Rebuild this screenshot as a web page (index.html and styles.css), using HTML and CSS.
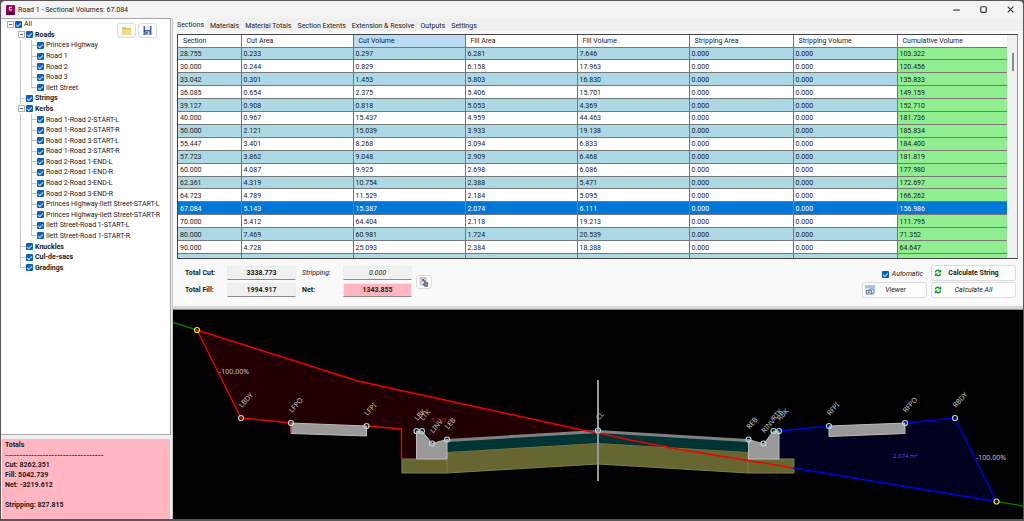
FILE: index.html
```html
<!DOCTYPE html>
<html lang="en">
<head>
    <meta charset="UTF-8">
    <meta name="viewport" content="width=device-width, initial-scale=1.0">
    <title>Road 1 - Sectional Volumes: 67.084</title>
    <link rel="stylesheet" href="styles.css">
</head>
<body>
    <div id="app">
        <header class="titlebar">
            <svg class="app-icon" viewBox="0 0 9 10">
                <rect width="9" height="10" rx="1" fill="#a3005c"/>
                <rect y="7" width="9" height="3" rx="1" fill="#5c0034"/>
                <path d="M6 2.2H3.4V5H6" fill="none" stroke="#fff" stroke-width="1"/>
            </svg>
            <h1>Road 1 - Sectional Volumes: 67.084</h1>
            <div class="window-buttons">
                <button type="button" aria-label="Minimize"><svg viewBox="0 0 8 8"><path d="M1 4.5h6"/></svg></button>
                <button type="button" aria-label="Maximize"><svg viewBox="0 0 8 8"><rect x="1.5" y="1.5" width="5" height="5" rx="1"/></svg></button>
                <button type="button" aria-label="Close"><svg viewBox="0 0 8 8"><path d="M1.5 1.5l5 5M6.5 1.5l-5 5"/></svg></button>
            </div>
        </header>

        <div class="content">
            <!-- String tree and overall totals -->
            <aside class="sidebar">
                <div class="tree-panel">
                    <ul id="tree" class="tree"></ul>
                    <div class="tree-tools">
                        <button type="button" class="tool-btn" aria-label="Open">
                            <svg viewBox="0 0 11 9"><path d="M1 1h3.500l1 1H10v6.500H1z" fill="#e3c75c"/><path d="M1 3.500h9v5H1z" fill="#f0dc86"/></svg>
                        </button>
                        <button type="button" class="tool-btn" aria-label="Save">
                            <svg viewBox="0 0 11 9"><path d="M1.500 0h8v9h-8z" fill="#4865a8"/><path d="M3 0h5v4H3z" fill="#e8eef8"/><path d="M3.500 5.500h4V9h-4z" fill="#c5cede"/><path d="M4.200 6h1.200v2.500H4.200z" fill="#27407c"/></svg>
                        </button>
                    </div>
                </div>
                <div class="totals">
                    <p>Totals</p>
                    <p class="rule">----------------------------------</p>
                    <p>Cut: 8262.351</p>
                    <p>Fill: 5042.739</p>
                    <p>Net: -3219.612</p>
                    <p>&nbsp;</p>
                    <p>Stripping: 827.815</p>
                </div>
            </aside>

            <main class="main">
                <nav class="tabs">
                    <a href="#" class="active">Sections</a>
                    <a href="#">Materials</a>
                    <a href="#">Material Totals</a>
                    <a href="#">Section Extents</a>
                    <a href="#">Extension &amp; Resolve</a>
                    <a href="#">Outputs</a>
                    <a href="#">Settings</a>
                </nav>

                <section class="panel">
                    <div class="grid-box">
                        <div class="grid-view">
                            <table>
                                <colgroup>
                                    <col class="c-section"><col class="c-area"><col class="c-area"><col class="c-area">
                                    <col class="c-area"><col class="c-strip"><col class="c-strip"><col class="c-area">
                                </colgroup>
                                <thead>
                                    <tr>
                                        <th>Section</th>
                                        <th>Cut Area</th>
                                        <th class="sorted">Cut Volume</th>
                                        <th>Fill Area</th>
                                        <th>Fill Volume</th>
                                        <th>Stripping Area</th>
                                        <th>Stripping Volume</th>
                                        <th>Cumulative Volume</th>
                                    </tr>
                                </thead>
                                <tbody id="rows"></tbody>
                            </table>
                        </div>
                        <div class="scrollbar"><div class="thumb"></div></div>
                    </div>

                    <div class="controls">
                        <div class="fields">
                            <label for="cut">Total Cut:</label>
                            <input type="text" id="cut" value="3338.773" readonly>
                            <label for="stripping" class="italic">Stripping:</label>
                            <input type="text" id="stripping" class="italic" value="0.000" readonly>
                            <label for="fill">Total Fill:</label>
                            <input type="text" id="fill" value="1994.917" readonly>
                            <label for="net">Net:</label>
                            <input type="text" id="net" class="negative" value="1343.855" readonly>
                        </div>
                        <button type="button" class="copy-btn" aria-label="Copy">
                            <svg viewBox="0 0 10 10"><path d="M1 .5h6v7.500H1z" fill="#cfe0f5" stroke="#9ab0d0" stroke-width=".6"/><path d="M2.500 1.500l3 3M5.500 1.500l-3 3" stroke="#d03040" stroke-width=".9"/><path d="M5 3.500v4l-1-.5.2 1.200 1.800 1.500h2.800V5.500L6.200 5V3.500z" fill="#7a828c" stroke="#4c545e" stroke-width=".5"/></svg>
                        </button>
                        <div class="actions">
                            <label class="auto"><input type="checkbox" checked><span>Automatic</span></label>
                            <button type="button" class="strong">
                                <svg viewBox="0 0 8 8"><use href="#refresh"/></svg>
                                <span>Calculate String</span>
                            </button>
                            <button type="button" class="italic">
                                <svg class="viewer-icon" viewBox="0 0 10 10"><rect width="10" height="10" fill="#d5e2f4"/><rect width="10" height="3" fill="#a9c3e8"/><path d="M1.500 5.500h5v3.500h-5zM3.500 5.500L5 4h4v3.500L6.500 9" fill="#e4ebf5" stroke="#50688c" stroke-width=".8"/><path d="M3 6.500h2v1.500H3z" fill="#6d86aa"/></svg>
                                <span>Viewer</span>
                            </button>
                            <button type="button" class="italic">
                                <svg viewBox="0 0 8 8"><use href="#refresh"/></svg>
                                <span>Calculate All</span>
                            </button>
                        </div>
                    </div>
                </section>

                <!-- Cross section drawing -->
                <svg class="section-view" viewBox="173 310 850 209">
                    <defs>
                        <g id="refresh" fill="none" stroke="#0f9d1f" stroke-width="1.5">
                            <path d="M1.500 3.400C1.500 1.300 4 .6 5.400 2"/>
                            <path d="M6.500 4.600C6.500 6.700 4 7.400 2.600 6"/>
                            <path d="M7.200.2v3.400H3.800zM.8 7.800V4.400h3.400z" fill="#0f9d1f" stroke="none"/>
                        </g>
                    </defs>
                    <polygon class="cut-area" points="197,330 358,381 587,431 598,433 447,442 432,443 422,431 416,431 416,459 401,459 401,429 366,426 291,423 241,418"/>
                    <polygon class="fill-area" points="779,431 829,426 905,423 955,418 996,501 794,468 794,459 779,459"/>

                    <polygon class="subbase" points="402,459 447,459 447,452 598,443 748,452 748,459 794,459 794,473 748,473 598,464 447,473 402,473"/>
                    <path class="subbase-line" d="M447 459v14M748 459v14M417 459h30M748 459h31"/>
                    <polygon class="base" points="447,441 598,432 748,441 748,452 598,443 447,452"/>
                    <polyline class="surface" points="447,440.500 598,431.500 748,440.500"/>
                    <polygon class="concrete" points="416.500,431 422,431 432,443.500 447,439.500 447,459 416.500,459"/>
                    <polygon class="concrete" points="748.500,439.500 763.500,444 773.500,431 779,431 779,459 748.500,459"/>
                    <polygon class="concrete" points="291,423 366.500,426 366.500,436 291,433.500"/>
                    <polygon class="concrete" points="829,426 905,423 905,433.500 829,436.500"/>
                    <path class="centre" d="M598 380v101"/>

                    <polyline class="natural" points="173,322.500 197,330"/>
                    <polyline class="natural" points="996.500,501.500 1023,506"/>
                    <polyline class="cut-line" points="291,423 241,418 197,330 358,381 587,431 598,433 630,440 680,449.500 748,460.500 793,468"/>
                    <polyline class="cut-line" points="366.500,426 401.500,429 401.500,459"/>
                    <path class="cut-line thin" d="M401.500 459v14M291 423v10"/>
                    <polyline class="fill-line" points="779,431 829,426"/>
                    <polyline class="fill-line" points="905,423 955,418 996.500,501.500 793,468"/>

                    <g id="points"></g>
                    <text class="slope" x="219" y="374">-100.00%</text>
                    <text class="slope" x="976" y="460">-100.00%</text>
                    <text class="area cut-text" x="431" y="422">5.143 m²</text>
                    <text class="area fill-text" x="893" y="458">2.074 m²</text>
                </svg>
            </main>
        </div>
    </div>

    <script>
        // name, level, last child of its parent
        const nodes = [
            ['All', 0], ['Roads', 1], ['Princes Highway', 2], ['Road 1', 2], ['Road 2', 2], ['Road 3', 2],
            ['Ilett Street', 2, true], ['Strings', 1], ['Kerbs', 1],
            ['Road 1-Road 2-START-L', 2], ['Road 1-Road 2-START-R', 2],
            ['Road 1-Road 3-START-L', 2], ['Road 1-Road 3-START-R', 2],
            ['Road 2-Road 1-END-L', 2], ['Road 2-Road 1-END-R', 2],
            ['Road 2-Road 3-END-L', 2], ['Road 2-Road 3-END-R', 2],
            ['Princes Highway-Ilett Street-START-L', 2], ['Princes Highway-Ilett Street-START-R', 2],
            ['Ilett Street-Road 1-START-L', 2], ['Ilett Street-Road 1-START-R', 2, true],
            ['Knuckles', 1], ['Cul-de-sacs', 1], ['Gradings', 1, true],
        ];

        const expandable = ['All', 'Roads', 'Kerbs'];

        document.getElementById('tree').innerHTML = nodes.map(([name, level, last]) => {
            let guides = '';
            if (level > 0) guides += '<i class="guide"></i>';
            if (level > 1) guides += '<i class="guide line"></i>';
            const kind = expandable.includes(name) ? 'expander' : last ? 'elbow' : 'tee';
            guides += `<i class="guide ${kind}${level === 0 ? ' root' : ''}"></i>`;
            return `<li class="level-${level}">${guides}<label><input type="checkbox" checked><span>${name}</span></label></li>`;
        }).join('');

        // section, cut area, cut volume, fill area, fill volume, cumulative volume
        const sections = [
            ['28.755', '0.233', '0.297', '6.281', '7.646', '103.322'],
            ['30.000', '0.244', '0.829', '6.158', '17.963', '120.456'],
            ['33.042', '0.301', '1.453', '5.803', '16.830', '135.833'],
            ['36.085', '0.654', '2.375', '5.406', '15.701', '149.159'],
            ['39.127', '0.908', '0.818', '5.053', '4.369', '152.710'],
            ['40.000', '0.967', '15.437', '4.959', '44.463', '181.736'],
            ['50.000', '2.121', '15.039', '3.933', '19.138', '185.834'],
            ['55.447', '3.401', '8.268', '3.094', '6.833', '184.400'],
            ['57.723', '3.862', '9.048', '2.909', '6.468', '181.819'],
            ['60.000', '4.087', '9.925', '2.698', '6.086', '177.980'],
            ['62.361', '4.319', '10.754', '2.388', '5.471', '172.697'],
            ['64.723', '4.789', '11.529', '2.184', '5.095', '166.262'],
            ['67.084', '5.143', '15.387', '2.074', '6.111', '156.986'],
            ['70.000', '5.412', '64.404', '2.118', '19.213', '111.795'],
            ['80.000', '7.469', '60.981', '1.724', '20.539', '71.352'],
            ['90.000', '4.728', '25.093', '2.384', '18.388', '64.647'],
            ['', '', '', '', '', ''],
        ];

        document.getElementById('rows').innerHTML = sections.map((row) => {
            const strip = row[0] ? '0.000' : '';
            const cells = [...row.slice(0, 5), strip, strip, row[5]];
            const selected = row[0] === '67.084' ? ' class="selected"' : '';
            return `<tr${selected}>${cells.map(c => `<td>${c}</td>`).join('')}</tr>`;
        }).join('');

        // string name, point x/y
        const points = [
            ['LBDY', 241, 418], ['LFPO', 291, 423], ['LFPI', 366.5, 426],
            ['LBK', 416.5, 431], ['LTK', 422, 431], ['LINV', 432, 443.5], ['LEB', 447, 439.5],
            ['CL', 598, 430.5], ['REB', 748.5, 439.5], ['RINV', 763.5, 443.5],
            ['RTK', 773.5, 431], ['RBK', 779, 431],
            ['RFPI', 829, 426], ['RFPO', 905, 423], ['RBDY', 955, 418],
        ];

        document.getElementById('points').innerHTML = points.map(([name, x, y]) => `
            <circle class="point" cx="${x}" cy="${y}" r="2.5"/>
            <text class="point-name" transform="translate(${x + 1} ${y - 10}) rotate(-48)">${name}</text>
        `).join('') + `
            <circle class="point end" cx="197" cy="330" r="2.5"/>
            <circle class="point end" cx="996.5" cy="501.5" r="2.5"/>
        `;
    </script>
</body>
</html>
```
FILE: styles.css
```css
/* Global Styles */
* {
    box-sizing: border-box;
}

body {
    margin: 0;
    background: #5a5558;
    color: #1a1a1a;
    font-family: Roboto, 'Open Sans', sans-serif;
    font-size: 7px;
    line-height: 10px;
}

h1, p, ul {
    margin: 0;
    padding: 0;
}

button, input {
    font: inherit;
    color: inherit;
}

button {
    display: flex;
    align-items: center;
    justify-content: center;
    padding: 0;
    background: #fdfdfd;
    border: 1px solid #dcdcdc;
    border-radius: 3px;
    cursor: pointer;
}

input[type="checkbox"] {
    appearance: none;
    flex: none;
    width: 7px;
    height: 7px;
    margin: 0;
    border-radius: 1px;
    background: #0a63b8;
    display: grid;
    place-items: center;
}

input[type="checkbox"]:checked::after {
    content: '';
    width: 4px;
    height: 2px;
    border-left: 1px solid #b9d8f2;
    border-bottom: 1px solid #b9d8f2;
    transform: rotate(-45deg);
}

.italic {
    font-style: italic;
}

#app {
    display: flex;
    flex-direction: column;
    height: 100vh;
    padding: 1px 1px 2px;
}

/* Title bar */
.titlebar {
    display: flex;
    align-items: center;
    height: 17px;
    padding: 0 8px 0 5px;
    background: #f3f3f3;
    border-radius: 4px 4px 0 0;
}

.app-icon {
    width: 9px;
    height: 10px;
}

.titlebar h1 {
    margin-left: 3px;
    font-size: 7px;
    font-weight: normal;
}

.window-buttons {
    display: flex;
    gap: 18px;
    margin-left: auto;
}

.window-buttons button {
    border: none;
    background: none;
}

.window-buttons svg {
    width: 9px;
    height: 9px;
    fill: none;
    stroke: #333;
    stroke-width: 1;
}

.content {
    display: flex;
    flex: 1;
    min-height: 0;
    background: #f0f0f0;
}

/* Sidebar */
.sidebar {
    display: flex;
    flex-direction: column;
    width: 172px;
    flex: none;
    border-right: 1px solid #c8c8c8;
}

.tree-panel {
    position: relative;
    flex: 1;
    margin-right: 1px;
    padding-left: 3px;
    background: #fff;
    border: 1px solid #a8a8a8;
    border-left: none;
}

.tree {
    display: grid;
    grid-auto-rows: 1fr;
    height: 254px;
    list-style: none;
}

.tree li {
    display: flex;
    align-items: stretch;
}

.tree label {
    display: flex;
    align-items: center;
    gap: 2px;
    white-space: nowrap;
}

.level-1 {
    font-weight: bold;
}

.guide {
    width: 11px;
    background: no-repeat 5px 0;
}

.line,
.tee,
.elbow {
    background-image: linear-gradient(#c4c4c4, #c4c4c4);
    background-size: 1px 100%;
}

.tee,
.elbow {
    background-image: linear-gradient(#c4c4c4, #c4c4c4), linear-gradient(#c4c4c4, #c4c4c4);
    background-position: 5px 0, 5px 50%;
    background-size: 1px 100%, 6px 1px;
}

.elbow {
    background-size: 1px 50%, 6px 1px;
}

.guide:first-child:not(.root) {
    background-image: none;
}

.guide.expander {
    display: flex;
    align-items: center;
    padding-left: 3px;
}

.expander::before {
    content: '';
    width: 5px;
    height: 5px;
    border: 1px solid #b0b0b0;
    background: linear-gradient(#556, #556) no-repeat center / 3px 1px #fff;
}

.tree-tools {
    position: absolute;
    top: 4px;
    right: 13px;
    display: flex;
    gap: 2px;
}

.tool-btn {
    width: 19px;
    height: 15px;
}

.tool-btn svg {
    width: 11px;
    height: 9px;
}

.totals {
    margin: 4px 2px 0 1px;
    padding: 1px 3px 9px;
    background: #ffb6c1;
    font-weight: bold;
}

.totals .rule {
    font-family: 'Noto Sans', sans-serif;
    font-size: 9px;
    font-weight: normal;
}

/* Tabs */
.main {
    display: flex;
    flex-direction: column;
    flex: 1;
    min-width: 0;
}

.tabs {
    display: flex;
    height: 13px;
    padding-left: 1px;
    flex: none;
}

.tabs a {
    padding: 2px 3px 0;
    color: #1a1a1a;
    text-decoration: none;
    line-height: 12px;
}

.tabs .active {
    padding-top: 1px;
    background: #f9f9f9;
}

.panel {
    padding: 3px 5px 8px 4px;
    background: #f9f9f9;
    border-bottom: 3px solid #d8d8d8;
}

/* Sections grid */
.grid-box {
    display: flex;
    height: 225px;
    border: 1px solid #444;
    border-right-color: #999;
}

.grid-view {
    flex: 1;
    overflow: hidden;
}

table {
    width: 100%;
    height: 232px;
    table-layout: fixed;
    border-collapse: collapse;
}

.c-section {
    width: 63px;
}

.c-area {
    width: 112px;
}

.c-strip {
    width: 104px;
}

th, td {
    height: 12px;
    padding: 1px 2px 0;
    border-right: 1px solid #777;
    border-bottom: 1px solid #777;
    text-align: left;
    white-space: nowrap;
}

th {
    padding: 1px 5px 0;
    background: #fff;
    font-weight: normal;
}

th.sorted {
    background: #bcdcf4;
}

tbody tr {
    background: #fff;
}

tbody tr:nth-child(odd) {
    background: #add8e6;
}

tbody td:last-child {
    background: #90ee90;
}

tbody tr.selected,
tbody tr.selected td {
    background: #0078d7;
    color: #fff;
}

.scrollbar {
    width: 10px;
    padding: 18px 3px 0 5px;
    background: #f0f0f0;
}

.thumb {
    width: 2px;
    height: 18px;
    background: #8a8a8a;
}

/* Totals and actions */
.controls {
    display: flex;
    align-items: center;
    padding: 6px 2px 0 8px;
}

.fields {
    display: grid;
    grid-template-columns: 42px 69px 47px 69px;
    row-gap: 3px;
    align-items: center;
}

.fields label {
    font-weight: bold;
}

.fields label:nth-of-type(even) {
    padding-left: 6px;
}

.fields input {
    width: 100%;
    height: 14px;
    padding: 0;
    border: 1px solid #ececec;
    border-bottom-color: #8c8c8c;
    border-radius: 1px;
    background: #f0f0f0;
    font-weight: bold;
    text-align: center;
}

.fields .italic {
    font-weight: normal;
}

.fields .negative {
    background: #ffb6c1;
}

.copy-btn {
    width: 16px;
    height: 14px;
    margin-left: 4px;
}

.copy-btn svg {
    width: 10px;
    height: 10px;
}

.actions {
    display: grid;
    grid-template-columns: 65px 85px;
    column-gap: 4px;
    row-gap: 1px;
    margin-left: auto;
}

.actions button {
    height: 16px;
    padding: 0 10px 0 2px;
}

.actions button span {
    flex: 1;
}

.actions svg {
    width: 8px;
    height: 8px;
}

.actions .viewer-icon {
    width: 10px;
    height: 10px;
}

.strong {
    font-weight: bold;
}

.auto {
    display: flex;
    align-items: center;
    justify-content: flex-end;
    gap: 3px;
    padding: 2px 4px 0 0;
    font-style: italic;
}

/* Cross section */
.section-view {
    flex: 1;
    min-height: 0;
    width: 100%;
    background: #000;
    border-top: 1px solid #888;
    font-family: 'Noto Sans', sans-serif;
}

.cut-area {
    fill: #200000;
}

.fill-area {
    fill: #00001f;
}

.subbase {
    fill: #666633;
    stroke: #80803a;
}

.subbase-line {
    stroke: #80803a;
}

.base {
    fill: #003333;
}

.surface {
    fill: none;
    stroke: #808080;
    stroke-width: 3;
}

.concrete {
    fill: #999;
    stroke: #bbb;
}

.centre {
    stroke: #999;
    stroke-width: 2;
}

.natural {
    fill: none;
    stroke: #007800;
    stroke-width: 1.4;
}

.cut-line {
    fill: none;
    stroke: #f00000;
    stroke-width: 1.4;
}

.thin {
    stroke-width: 1;
}

.fill-line {
    fill: none;
    stroke: #0000e6;
    stroke-width: 1.4;
}

.point {
    fill: none;
    stroke: #add8e6;
    stroke-width: 1.2;
}

.end {
    stroke: #f5e600;
}

.point-name,
.slope {
    fill: #c4c4c4;
    font-size: 7px;
}

.area {
    font-size: 6px;
}

.cut-text {
    fill: #a83232;
}

.fill-text {
    fill: #5050d8;
}
```
